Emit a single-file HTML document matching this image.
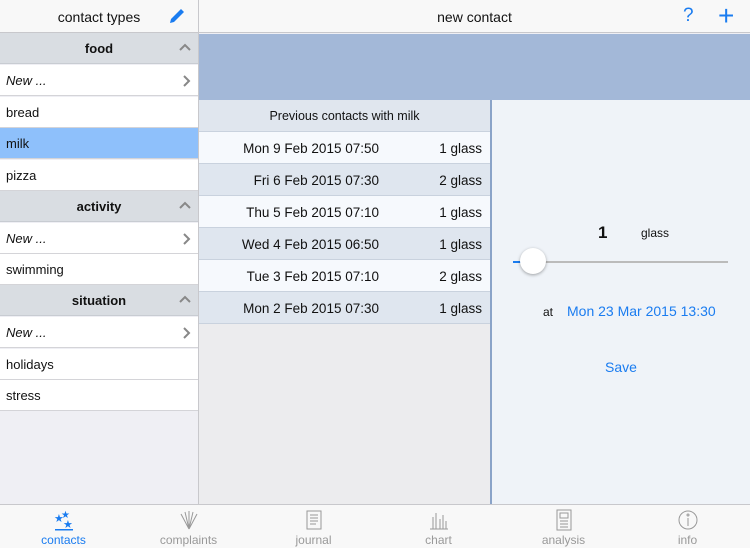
<!DOCTYPE html>
<html><head><style>
*{margin:0;padding:0;box-sizing:border-box}
body{width:750px;height:548px;position:relative;overflow:hidden;font-family:"Liberation Sans",sans-serif;background:#efeff4;font-size:13px;color:#111}
.a{position:absolute}
.row{position:absolute;left:0;width:198px;height:31px;background:#fff;border-bottom:1px solid #d4d4d8;line-height:31px;padding-left:6px}
.hd{position:absolute;left:0;width:198px;height:31px;background:#d9dde2;line-height:31px;text-align:center;font-weight:bold;border-bottom:1px solid #c8ccd2}
.chev{position:absolute;right:7px;top:10px}
.tr{position:absolute;left:199px;width:291px;height:32px;border-bottom:1px solid #c9d2de;line-height:33px;font-size:13.5px}
.tr .d{position:absolute;right:111px}.tr .g{position:absolute;right:8px}
.tab{position:absolute;top:509px;width:125px;text-align:center;color:#999;font-size:12px;line-height:14px}
.tab svg{display:block;margin:0 auto 2px}
</style></head><body>
<div class="a" style="left:0;top:0;width:750px;height:33px;background:#f8f8f8;border-bottom:1px solid #c8c8cc"></div>
<div class="a" style="left:198px;top:0;width:1px;height:504px;background:#c8c8cc"></div>
<div class="a" style="left:0;top:9px;width:198px;text-align:center;font-size:14px">contact types</div>
<svg class="a" style="left:167px;top:8px" width="20" height="18" viewBox="0 0 20 18"><path d="M3 15 L4 11 L14 1 L17 4 L7 14 Z" fill="#1a7cf0"/></svg>
<div class="a" style="left:199px;top:9px;width:551px;text-align:center;font-size:14px">new contact</div>
<div class="a" style="left:683px;top:5px;color:#1a7cf0;font-size:19px">?</div>
<div class="a" style="left:718px;top:0px;color:#1a7cf0;font-size:28px;font-weight:300">+</div>

<div class="hd" style="top:33px">food<svg class="chev" width="12" height="8" viewBox="0 0 12 8"><path d="M1 7 L6 2 L11 7" fill="none" stroke="#888" stroke-width="2"/></svg></div>
<div class="row" style="top:65px;font-style:italic">New ...<svg class="chev" width="8" height="12" viewBox="0 0 8 12"><path d="M1 1 L6 6 L1 11" fill="none" stroke="#888" stroke-width="2"/></svg></div>
<div class="row" style="top:97px">bread</div>
<div class="row" style="top:128px;background:#8ec0fb">milk</div>
<div class="row" style="top:160px">pizza</div>
<div class="hd" style="top:191px">activity<svg class="chev" width="12" height="8" viewBox="0 0 12 8"><path d="M1 7 L6 2 L11 7" fill="none" stroke="#888" stroke-width="2"/></svg></div>
<div class="row" style="top:223px;font-style:italic">New ...<svg class="chev" width="8" height="12" viewBox="0 0 8 12"><path d="M1 1 L6 6 L1 11" fill="none" stroke="#888" stroke-width="2"/></svg></div>
<div class="row" style="top:254px">swimming</div>
<div class="hd" style="top:285px">situation<svg class="chev" width="12" height="8" viewBox="0 0 12 8"><path d="M1 7 L6 2 L11 7" fill="none" stroke="#888" stroke-width="2"/></svg></div>
<div class="row" style="top:317px;font-style:italic">New ...<svg class="chev" width="8" height="12" viewBox="0 0 8 12"><path d="M1 1 L6 6 L1 11" fill="none" stroke="#888" stroke-width="2"/></svg></div>
<div class="row" style="top:349px">holidays</div>
<div class="row" style="top:380px">stress</div>

<div class="a" style="left:199px;top:34px;width:551px;height:66px;background:#a3b8d8"></div>
<div class="a" style="left:199px;top:100px;width:291px;height:404px;background:#ececee"></div>
<div class="a" style="left:199px;top:100px;width:291px;height:32px;background:#e0e6ee;text-align:center;line-height:32px;font-size:12.5px;border-bottom:1px solid #c9d2de">Previous contacts with milk</div>
<div class="tr" style="top:132px;background:#f6f9fd"><span class="d">Mon 9 Feb 2015 07:50</span><span class="g">1 glass</span></div>
<div class="tr" style="top:164px;background:#dfe6ef"><span class="d">Fri 6 Feb 2015 07:30</span><span class="g">2 glass</span></div>
<div class="tr" style="top:196px;background:#f6f9fd"><span class="d">Thu 5 Feb 2015 07:10</span><span class="g">1 glass</span></div>
<div class="tr" style="top:228px;background:#dfe6ef"><span class="d">Wed 4 Feb 2015 06:50</span><span class="g">1 glass</span></div>
<div class="tr" style="top:260px;background:#f6f9fd"><span class="d">Tue 3 Feb 2015 07:10</span><span class="g">2 glass</span></div>
<div class="tr" style="top:292px;background:#dfe6ef"><span class="d">Mon 2 Feb 2015 07:30</span><span class="g">1 glass</span></div>

<div class="a" style="left:490px;top:100px;width:2px;height:404px;background:#8aa3c8"></div>
<div class="a" style="left:492px;top:100px;width:258px;height:404px;background:#eff3f8"></div>
<div class="a" style="left:598px;top:223px;font-size:17px;font-weight:bold">1</div>
<div class="a" style="left:641px;top:226px;font-size:12px">glass</div>
<div class="a" style="left:513px;top:261px;width:215px;height:2px;background:#bbb"></div>
<div class="a" style="left:513px;top:261px;width:20px;height:2px;background:#1a7cf0"></div>
<div class="a" style="left:520px;top:248px;width:26px;height:26px;border-radius:50%;background:#fff;box-shadow:0 1px 3px rgba(0,0,0,.35)"></div>
<div class="a" style="left:543px;top:305px;font-size:12px">at</div>
<div class="a" style="left:567px;top:303px;font-size:14px;color:#1a7cf0">Mon 23 Mar 2015 13:30</div>
<div class="a" style="left:605px;top:359px;font-size:14px;color:#1a7cf0">Save</div>

<div class="a" style="left:0;top:504px;width:750px;height:44px;background:#f8f8f8;border-top:1px solid #c8c8cc"></div>
<div class="tab" style="left:1px;color:#1a7cf0"><svg width="22" height="22" viewBox="0 0 22 22"><text x="1" y="13" font-size="11" fill="#1a7cf0">★</text><text x="8" y="9" font-size="10" fill="#1a7cf0">★</text><text x="10" y="19" font-size="11" fill="#1a7cf0">★</text><rect x="2" y="20" width="18" height="1.5" fill="#1a7cf0"/></svg>contacts</div>
<div class="tab" style="left:126px"><svg width="22" height="22" viewBox="0 0 22 22" fill="none" stroke="#999"><path d="M11 20 L3 5 M11 20 L7 3 M11 20 L11 2 M11 20 L15 3 M11 20 L19 5"/></svg>complaints</div>
<div class="tab" style="left:251px"><svg width="22" height="22" viewBox="0 0 22 22" fill="none" stroke="#999"><rect x="4" y="2" width="14" height="18"/><path d="M7 6h8M7 9h8M7 12h8M7 15h6"/></svg>journal</div>
<div class="tab" style="left:376px"><svg width="22" height="22" viewBox="0 0 22 22" fill="none" stroke="#999"><path d="M2 20h18M5 20V8M8 20V4M12 20V10M15 20V6M18 20V12"/></svg>chart</div>
<div class="tab" style="left:501px"><svg width="22" height="22" viewBox="0 0 22 22" fill="none" stroke="#999"><rect x="4" y="1" width="14" height="20"/><rect x="7" y="4" width="8" height="5"/><path d="M7 12h8M7 15h8M7 18h8"/></svg>analysis</div>
<div class="tab" style="left:625px"><svg width="22" height="22" viewBox="0 0 22 22" fill="none" stroke="#999"><circle cx="11" cy="11" r="9"/><path d="M11 9v8"/><circle cx="11" cy="6" r="1"/></svg>info</div>
</body></html>
